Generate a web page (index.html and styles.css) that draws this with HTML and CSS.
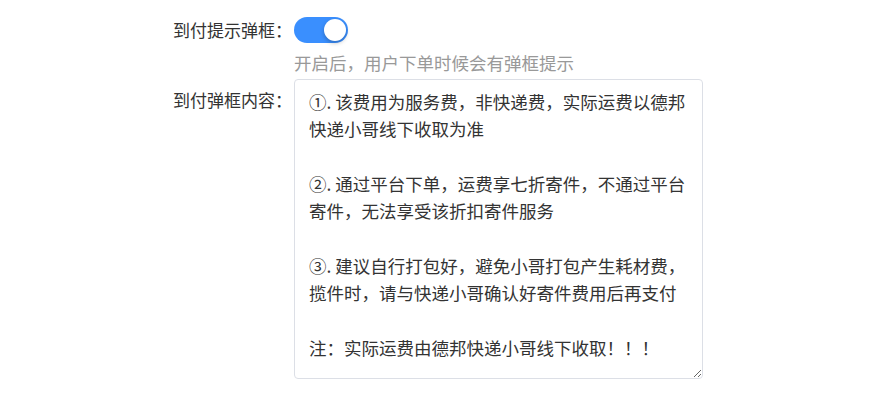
FILE: index.html
```html
<!DOCTYPE html>
<html lang="zh-CN">
<head>
    <meta charset="UTF-8">
    <title>到付设置</title>
    <link rel="stylesheet" href="styles.css">
</head>
<body>

<div class="form">
    <div class="row">
        <label class="label">到付提示弹框：</label>
        <div class="field">
            <div class="switch on"><span class="knob"></span></div>
            <div class="hint">开启后，用户下单时候会有弹框提示</div>
        </div>
    </div>

    <div class="row">
        <label class="label label-top">到付弹框内容：</label>
        <div class="field">
            <textarea class="content">①. 该费用为服务费，非快递费，实际运费以德邦快递小哥线下收取为准

②. 通过平台下单，运费享七折寄件，不通过平台寄件，无法享受该折扣寄件服务

③. 建议自行打包好，避免小哥打包产生耗材费，揽件时，请与快递小哥确认好寄件费用后再支付

注：实际运费由德邦快递小哥线下收取！！！</textarea>
        </div>
    </div>
</div>

</body>
</html>
```

FILE: styles.css
```css
body {
    margin: 0;
    padding: 0;
    background: #fff;
    font-family: "Microsoft YaHei", "Noto Sans CJK SC", sans-serif;
    color: #333;
}

.form { padding-top: 17px; }

.row { display: flex; align-items: flex-start; }
.row + .row { margin-top: 3px; }

.label {
    width: 294px;
    padding-right: 2px;
    box-sizing: border-box;
    text-align: right;
    font-size: 17px;
    line-height: 26px;
    color: #333;
}
.label-top { padding-top: 8px; }

.field { display: flex; flex-direction: column; align-items: flex-start; }

.switch {
    position: relative;
    width: 54px;
    height: 26px;
    border-radius: 13px;
    background: #dcdfe6;
    cursor: pointer;
}
.switch.on { background: #3a8ffe; }
.switch .knob {
    position: absolute;
    top: 2px;
    left: 2px;
    width: 22px;
    height: 22px;
    border-radius: 50%;
    background: #fff;
    box-shadow: 0 2px 4px rgba(0,0,0,0.25);
}
.switch.on .knob { left: 30px; }

.hint {
    margin-top: 7px;
    font-size: 17.5px;
    line-height: 26px;
    color: #999;
}

.content {
    width: 409px;
    height: 300px;
    box-sizing: border-box;
    padding: 8px 14px;
    border: 1px solid #dcdfe6;
    border-radius: 4px;
    font-family: inherit;
    font-size: 17.5px;
    line-height: 27.3px;
    color: #333;
    resize: both;
    outline: none;
    overflow: hidden;
}
```
